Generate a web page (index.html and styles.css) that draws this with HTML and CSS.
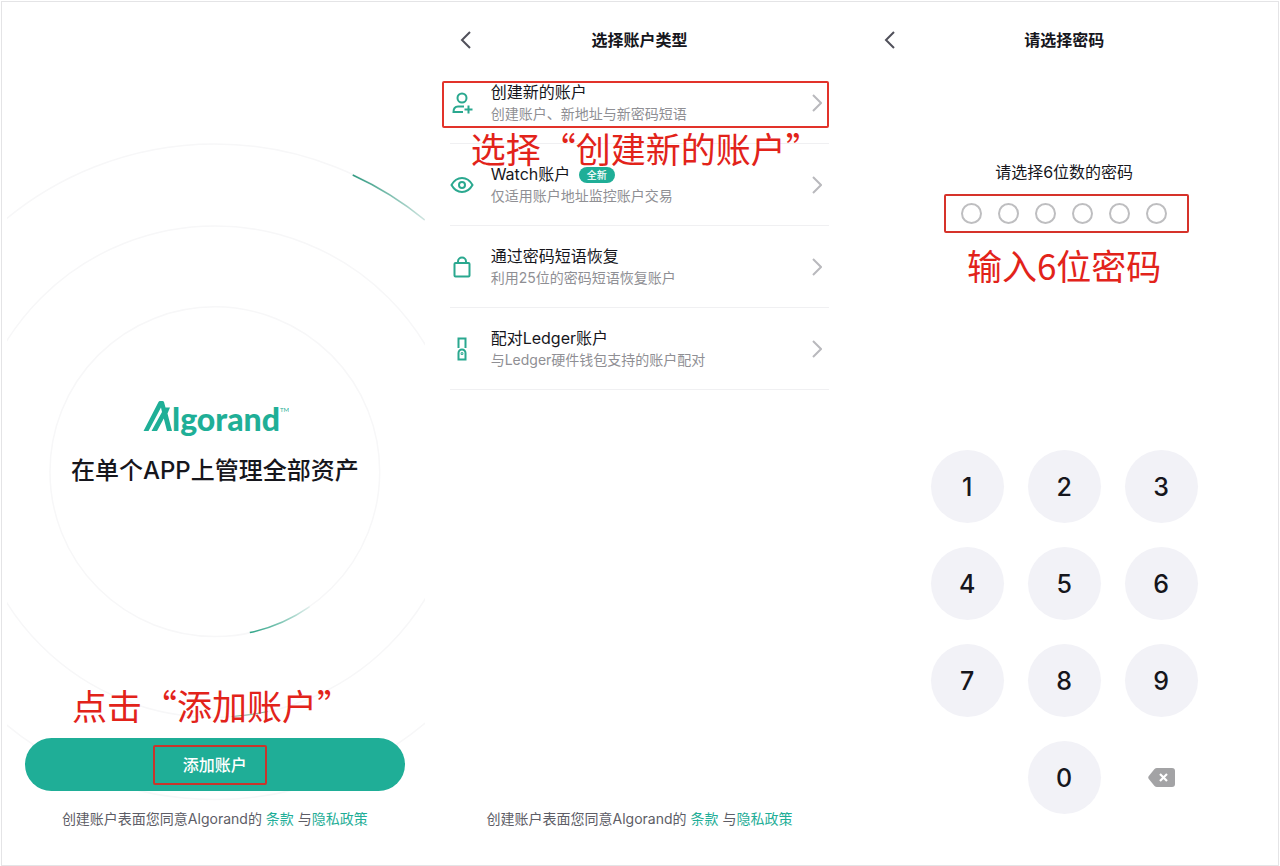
FILE: index.html
```html
<!DOCTYPE html>
<html lang="zh-CN">
<head>
    <meta charset="UTF-8">
    <meta name="viewport" content="width=device-width, initial-scale=1.0">
    <title>Algorand 创建账户</title>
    <link rel="stylesheet" href="styles.css">
</head>
<body>

    <main class="board">

        <!-- Step 1: welcome -->
        <section class="screen welcome">
            <svg class="orbits" viewBox="0 0 418 660" aria-hidden="true">
                <defs>
                    <linearGradient id="fadeTop" x1="0" y1="0" x2="1" y2="1">
                        <stop offset="0" stop-color="#2f9a80"/>
                        <stop offset="1" stop-color="#2f9a80" stop-opacity="0.2"/>
                    </linearGradient>
                    <linearGradient id="fadeBottom" x1="0" y1="1" x2="1" y2="0">
                        <stop offset="0" stop-color="#2fa588"/>
                        <stop offset="1" stop-color="#2fa588" stop-opacity="0.1"/>
                    </linearGradient>
                </defs>
                <g fill="none" stroke="#f7f7f8" stroke-width="1.5">
                    <circle cx="208" cy="329" r="165"/>
                    <circle cx="208" cy="329" r="246"/>
                    <circle cx="208" cy="329" r="328"/>
                </g>
                <path d="M346 32 A328 328 0 0 1 418 77" fill="none" stroke="url(#fadeTop)" stroke-width="1.5"/>
                <path d="M243 490 A165 165 0 0 0 303 464" fill="none" stroke="url(#fadeBottom)" stroke-width="1.5"/>
                <path d="M225 574 A246 246 0 0 0 261 569" fill="none" stroke="#7fae98"/>
            </svg>

            <div class="hero">
                <svg class="logo" viewBox="0 0 148 40" role="img" aria-label="Algorand">
                    <path d="M2.500 32 L17.500 3 Q18 2 19 2 H21.500 Q22.500 2 23 3 L24.500 8.500 H29 L26.500 14.500 L31 32 H26 L22.800 19.500 L16 32 H10.500 L21 13 L20 8.500 L7.500 32 Z" fill="#1faf97"/>
                    <text x="31" y="32" class="logo-text">lgorand</text>
                    <text x="139" y="13" class="logo-tm">TM</text>
                </svg>
                <h1>在单个APP上管理全部资产</h1>
            </div>

            <p class="note note-add">点击“添加账户”</p>
            <button class="add-button" type="button"><span class="mark">添加账户</span></button>
            <p class="terms">创建账户表面您同意Algorand的 <a href="#">条款</a> 与<a href="#">隐私政策</a></p>
        </section>

        <!-- Step 2: account type -->
        <section class="screen">
            <header class="top-bar">
                <button class="back" type="button" aria-label="返回">
                    <svg width="12" height="18" viewBox="0 0 12 18"><path d="M10 1 L2 9 L10 17"/></svg>
                </button>
                <h2>选择账户类型</h2>
            </header>

            <div class="options">
                <button class="option" type="button">
                    <svg class="icon" viewBox="0 0 24 24">
                        <circle cx="12" cy="7" r="4.500"/>
                        <path d="M14 15.500 H8 C5 15.500 3.500 18 3.500 21 H13"/>
                        <path d="M18.500 14.500 V22.500 M14.500 18.500 H22.500"/>
                    </svg>
                    <span class="option-text">
                        <span class="option-title">创建新的账户</span>
                        <span class="option-info">创建账户、新地址与新密码短语</span>
                    </span>
                    <svg class="arrow" viewBox="0 0 10 18"><path d="M1 1 L9 9 L1 17"/></svg>
                    <span class="frame"></span>
                </button>
                <button class="option" type="button">
                    <svg class="icon" viewBox="0 0 24 24">
                        <path d="M1.500 12 C4 7.500 8 5 12 5 S20 7.500 22.500 12 C20 16.500 16 19 12 19 S4 16.500 1.500 12 Z"/>
                        <circle cx="12" cy="12" r="3"/>
                    </svg>
                    <span class="option-text">
                        <span class="option-title">Watch账户 <span class="badge">全新</span></span>
                        <span class="option-info">仅适用账户地址监控账户交易</span>
                    </span>
                    <svg class="arrow" viewBox="0 0 10 18"><path d="M1 1 L9 9 L1 17"/></svg>
                </button>
                <button class="option" type="button">
                    <svg class="icon" viewBox="0 0 24 24">
                        <rect x="4.500" y="8" width="15" height="13.500" rx="1"/>
                        <path d="M8 8 V6.500 A4 4 0 0 1 16 6.500 V8"/>
                    </svg>
                    <span class="option-text">
                        <span class="option-title">通过密码短语恢复</span>
                        <span class="option-info">利用25位的密码短语恢复账户</span>
                    </span>
                    <svg class="arrow" viewBox="0 0 10 18"><path d="M1 1 L9 9 L1 17"/></svg>
                </button>
                <button class="option" type="button">
                    <svg class="icon" viewBox="0 0 24 24">
                        <path d="M8.500 11 V1.500 H15.500 V11"/>
                        <path d="M8.500 22.500 V16 A3.500 3.500 0 0 1 15.500 16 V22.500 Z"/>
                        <circle cx="12" cy="16.500" r="0.500"/>
                    </svg>
                    <span class="option-text">
                        <span class="option-title">配对Ledger账户</span>
                        <span class="option-info">与Ledger硬件钱包支持的账户配对</span>
                    </span>
                    <svg class="arrow" viewBox="0 0 10 18"><path d="M1 1 L9 9 L1 17"/></svg>
                </button>
                <p class="note note-create">选择“创建新的账户”</p>
            </div>

            <p class="terms">创建账户表面您同意Algorand的 <a href="#">条款</a> 与<a href="#">隐私政策</a></p>
        </section>

        <!-- Step 3: pin code -->
        <section class="screen">
            <header class="top-bar">
                <button class="back" type="button" aria-label="返回">
                    <svg width="12" height="18" viewBox="0 0 12 18"><path d="M10 1 L2 9 L10 17"/></svg>
                </button>
                <h2>请选择密码</h2>
            </header>

            <div class="pin">
                <p class="pin-label">请选择6位数的密码</p>
                <div class="pin-dots">
                    <span class="dot"></span>
                    <span class="dot"></span>
                    <span class="dot"></span>
                    <span class="dot"></span>
                    <span class="dot"></span>
                    <span class="dot"></span>
                </div>
                <p class="pin-note">输入6位密码</p>
            </div>

            <div class="keypad">
                <button type="button">1</button>
                <button type="button">2</button>
                <button type="button">3</button>
                <button type="button">4</button>
                <button type="button">5</button>
                <button type="button">6</button>
                <button type="button">7</button>
                <button type="button">8</button>
                <button type="button">9</button>
                <button type="button" class="zero">0</button>
                <button type="button" class="delete" aria-label="删除">
                    <svg width="27" height="19" viewBox="0 0 27 19">
                        <path d="M9 0 H24 Q27 0 27 3 V16 Q27 19 24 19 H9 Q7.500 19 6.500 18 L0.800 11 Q-0.300 9.500 0.800 8 L6.500 1 Q7.500 0 9 0 Z" fill="#a3a3a5"/>
                        <path d="M12 6 L19 13 M19 6 L12 13" stroke="#fff" stroke-width="2.200"/>
                    </svg>
                </button>
            </div>
        </section>

    </main>

</body>
</html>
```
FILE: styles.css
```css
* {
    box-sizing: border-box;
}

body {
    margin: 0;
    padding: 1px;
    background: #fff;
    color: #16161c;
    font-family: Inter, 'Noto Sans CJK SC', sans-serif;
}

h1,
h2,
p {
    margin: 0;
}

button {
    padding: 0;
    border: none;
    background: none;
    color: inherit;
    font-family: inherit;
    cursor: pointer;
}

.board {
    display: grid;
    grid-template-columns: repeat(3, 1fr);
    min-height: calc(100vh - 1px);
    padding-right: 2px;
    border: 1px solid #e4e4e6;
}

.screen {
    position: relative;
    display: flex;
    flex-direction: column;
    padding: 20px 22px 35px 23px;
}

/* Welcome screen */
.orbits {
    position: absolute;
    top: 141px;
    left: 5px;
    width: calc(100% - 7px);
}

.hero {
    position: relative;
    flex: 1;
    display: flex;
    flex-direction: column;
    align-items: center;
    padding-top: 377px;
}

.logo {
    width: 148px;
    height: 40px;
}

.logo-text {
    font-family: Lato, sans-serif;
    font-size: 32px;
    font-weight: 900;
    fill: #1faf97;
}

.logo-tm {
    font-family: Lato, sans-serif;
    font-size: 6px;
    fill: #1faf97;
}

h1 {
    margin-top: 14px;
    font-size: 24px;
    font-weight: 500;
    line-height: 36px;
}

.add-button {
    position: relative;
    height: 53px;
    border-radius: 27px;
    background: #1fae97;
    color: #fff;
    font-size: 16px;
    font-weight: 500;
}

.mark {
    display: inline-block;
    padding: 6px 18px 6px 28px;
    margin-right: 10px;
    border: 2px solid #c8352b;
    border-radius: 2px;
    line-height: 24px;
}

.terms {
    margin-top: 17px;
    color: #5d5d66;
    font-size: 14px;
    line-height: 22px;
    text-align: center;
}

.terms a {
    color: #1fae97;
    text-decoration: none;
}

/* Red notes */
.note,
.pin-note {
    color: #e2231a;
    font-family: 'Noto Sans CJK SC', sans-serif;
    font-size: 35px;
    line-height: 44px;
    white-space: nowrap;
}

.note {
    position: absolute;
}

.note-add {
    left: 70px;
    bottom: 138px;
}

.note-create {
    top: 68px;
    left: 21px;
}

.frame {
    position: absolute;
    top: 19px;
    right: 0;
    left: -8px;
    height: 47px;
    border: 2px solid #e2332a;
    border-radius: 2px;
}

/* Header */
.top-bar {
    display: grid;
    grid-template-columns: 32px 1fr 32px;
    align-items: center;
    height: 36px;
}

.back {
    display: flex;
    justify-content: center;
    height: 18px;
}

.back path {
    fill: none;
    stroke: #50505a;
    stroke-width: 2;
}

h2 {
    font-size: 16px;
    font-weight: 700;
    line-height: 24px;
    text-align: center;
}

/* Account types */
.options {
    position: relative;
    flex: 1;
    padding-top: 4px;
}

.option {
    position: relative;
    display: flex;
    align-items: center;
    width: 100%;
    height: 82px;
    padding-right: 7px;
    border-bottom: 1px solid #f0f0f2;
    text-align: left;
}

.icon {
    width: 24px;
    height: 24px;
    margin-right: 17px;
    fill: none;
    stroke: #2aa88f;
    stroke-width: 2;
}

.option-text {
    flex: 1;
}

.option-title,
.option-info {
    display: block;
    font-size: 16px;
    line-height: 22px;
}

.option-info {
    color: #8f8f94;
    font-size: 14px;
}

.badge {
    display: inline-block;
    margin-left: 4px;
    padding: 0 8px;
    border-radius: 8px;
    background: #1fae97;
    color: #fff;
    font-size: 10px;
    font-weight: 500;
    line-height: 16px;
    vertical-align: 1px;
}

.arrow {
    width: 10px;
    height: 18px;
    fill: none;
    stroke: #b9b9bd;
    stroke-width: 2;
}

/* Pin code */
.pin {
    flex: 1;
    display: flex;
    flex-direction: column;
    align-items: center;
    padding-top: 102px;
}

.pin-label {
    font-size: 16px;
    line-height: 24px;
}

.pin-dots {
    display: flex;
    justify-content: center;
    gap: 16px;
    margin-top: 10px;
    margin-left: 5px;
    padding: 7px 20px 7px 15px;
    border: 2px solid #d6322a;
    border-radius: 2px;
}

.dot {
    width: 21px;
    height: 21px;
    border: 2px solid #bebec0;
    border-radius: 50%;
}

.pin-note {
    margin-top: 10px;
}

.keypad {
    display: grid;
    grid-template-columns: repeat(3, 73px);
    justify-content: center;
    gap: 24px;
    margin-bottom: 16px;
}

.keypad button {
    height: 73px;
    border-radius: 50%;
    background: #f2f2f7;
    font-size: 25px;
    font-weight: 500;
}

.keypad .zero {
    grid-column: 2;
}

.keypad .delete {
    background: none;
}
```
